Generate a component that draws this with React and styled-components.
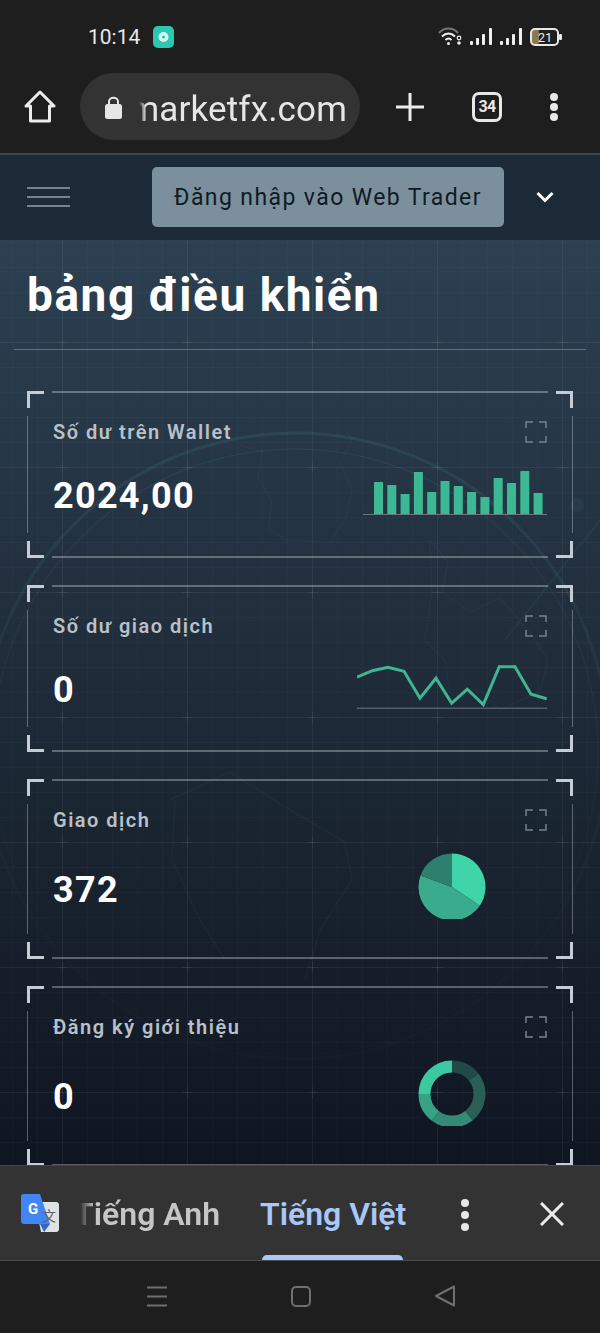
import React from 'react';
import styled, { createGlobalStyle } from 'styled-components';

const GlobalStyle = createGlobalStyle`
  html, body {
    margin: 0;
    padding: 0;
    background: #1e1e1e;
  }

  body {
    font-family: Roboto, "Noto Sans", sans-serif;
  }
`;

const Page = styled.div`
  width: 600px;
  height: 1333px;
  display: flex;
  flex-direction: column;
  overflow: hidden;
`;

const TopChrome = styled.div`
  height: 153px;
  background: #1e1e1e;
  display: flex;
  flex-direction: column;
  flex-shrink: 0;
`;

const StatusBar = styled.div`
  height: 73px;
  padding: 0 38px 0 88px;
  display: flex;
  align-items: center;
  box-sizing: border-box;
`;

const Clock = styled.span`
  color: #e8e8e8;
  font-size: 21px;
  width: 65px;
  padding-top: 1px;
`;

const StatusIcons = styled.div`
  margin-left: auto;
  display: flex;
  align-items: center;
  gap: 8px;
`;

const BrowserBar = styled.div`
  height: 80px;
  display: flex;
  align-items: flex-start;
`;

const HomeButton = styled.div`
  width: 80px;
  height: 67px;
  display: flex;
  align-items: center;
  justify-content: center;
`;

const AddressPill = styled.div`
  width: 280px;
  height: 67px;
  border-radius: 34px;
  background: #333333;
  display: flex;
  align-items: center;
  padding-left: 25px;
  box-sizing: border-box;
  gap: 17px;
`;

const AddressClip = styled.div`
  width: 208px;
  padding-top: 5px;
  overflow: hidden;
  display: flex;
  justify-content: flex-end;
  mask-image: linear-gradient(to right, transparent 0, #000 7px);
`;

const AddressText = styled.span`
  color: #e6e6e6;
  font-size: 35px;
  white-space: nowrap;
  letter-spacing: 0.15px;
`;

const PlusButton = styled.div`
  width: 100px;
  height: 67px;
  display: flex;
  align-items: center;
  justify-content: center;
`;

const TabCount = styled.div`
  width: 30px;
  height: 30px;
  margin-left: 12px;
  margin-top: 19px;
  border: 3px solid #e8e8e8;
  border-radius: 7px;
  box-sizing: border-box;
  color: #e8e8e8;
  font-size: 16px;
  font-weight: 700;
  letter-spacing: -0.6px;
  line-height: 24px;
  text-align: center;
  flex-shrink: 0;
`;

const MenuDots = styled.div`
  display: flex;
  flex-direction: column;
  gap: ${(props) => props.$gap}px;
  margin-left: ${(props) => props.$left}px;
  margin-top: ${(props) => props.$top}px;

  span {
    width: ${(props) => props.$size}px;
    height: ${(props) => props.$size}px;
    border-radius: 50%;
    background: #e8e8e8;
  }
`;

const SiteNav = styled.div`
  height: 87px;
  flex-shrink: 0;
  background: #1c2a38;
  border-top: 2px solid #3d4750;
  box-sizing: border-box;
  display: flex;
  align-items: flex-start;
  padding: 12px 0 0 27px;
`;

const Burger = styled.div`
  width: 43px;
  height: 60px;
  margin-right: 82px;
  display: flex;
  flex-direction: column;
  justify-content: center;
  gap: 7px;

  span {
    height: 2px;
    background: #76838e;
  }
`;

const TraderButton = styled.div`
  width: 352px;
  height: 60px;
  border-radius: 5px;
  background: #7b909c;
  color: #0f1a24;
  font-size: 23px;
  letter-spacing: 1.4px;
  display: flex;
  align-items: center;
  justify-content: center;
`;

const Chevron = styled.div`
  width: 82px;
  height: 60px;
  display: flex;
  align-items: center;
  justify-content: center;
`;

const Main = styled.main`
  position: relative;
  height: 925px;
  flex-shrink: 0;
  overflow: hidden;
  background:
    linear-gradient(rgba(255, 255, 255, 0.035) 1px, transparent 1px) 0 102px / 100% 125px,
    linear-gradient(90deg, rgba(255, 255, 255, 0.035) 1px, transparent 1px) 62px 0 / 125px 100%,
    linear-gradient(rgba(255, 255, 255, 0.018) 1px, transparent 1px) 0 2px / 100% 25px,
    linear-gradient(90deg, rgba(255, 255, 255, 0.018) 1px, transparent 1px) 12px 0 / 25px 100%,
    linear-gradient(#2c4052 0, #283a4a 140px, #212e3c 380px, #1b2633 560px, #161e2b 720px, #0f1622 925px);
`;

const Globe = styled.svg`
  position: absolute;
  left: 0;
  top: 0;
  width: 600px;
  height: 925px;
  pointer-events: none;
`;

const Content = styled.div`
  position: relative;
`;

const Title = styled.h1`
  margin: 0 14px;
  height: 110px;
  padding: 26px 0 0 13px;
  box-sizing: border-box;
  border-bottom: 1px solid rgba(255, 255, 255, 0.27);
  color: #ffffff;
  font-size: 46px;
  line-height: 58px;
  font-weight: 700;
  letter-spacing: 1.55px;
`;

const CardList = styled.div`
  padding: 41px 27px 0;
  display: flex;
  flex-direction: column;
  gap: 27px;
`;

const Card = styled.section`
  position: relative;
  height: ${(props) => props.$height}px;
  padding: 29px 26px 0;
  box-sizing: border-box;
  flex-shrink: 0;

  &::before {
    content: '';
    position: absolute;
    left: 25px;
    right: 25px;
    top: 0;
    bottom: 0;
    border-top: 2px solid rgba(255, 255, 255, 0.3);
    border-bottom: 2px solid rgba(255, 255, 255, 0.3);
  }

  &::after {
    content: '';
    position: absolute;
    left: 0;
    right: 0;
    top: 25px;
    bottom: 25px;
    border-left: 1px solid rgba(255, 255, 255, 0.3);
    border-right: 1px solid rgba(255, 255, 255, 0.3);
  }
`;

const Corner = styled.span`
  position: absolute;
  width: 17px;
  height: 17px;
  box-sizing: border-box;
  border: 0 solid #c6ccd3;
  ${(props) => (props.$v === 'top' ? 'top: 0; border-top-width: 3px;' : 'bottom: 0; border-bottom-width: 3px;')}
  ${(props) => (props.$h === 'left' ? 'left: 0; border-left-width: 3px;' : 'right: 0; border-right-width: 3px;')}
`;

const CardHeader = styled.div`
  height: 24px;
  display: flex;
  align-items: center;
  justify-content: space-between;
`;

const CardLabel = styled.h2`
  margin: 0;
  color: #b9c0c8;
  font-size: 20px;
  font-weight: 600;
  letter-spacing: 1.5px;
`;

const CardBody = styled.div`
  height: ${(props) => props.$height}px;
  margin-top: ${(props) => props.$gap}px;
  display: flex;
  align-items: center;
  justify-content: space-between;
`;

const CardValue = styled.div`
  color: #ffffff;
  font-size: 36px;
  font-weight: 700;
  letter-spacing: 1.3px;
  line-height: 42px;
  margin-top: ${(props) => props.$shift || 0}px;
`;

const RoundChart = styled.svg`
  margin-right: 61px;
  flex-shrink: 0;
`;

const TranslateBar = styled.div`
  height: 96px;
  flex-shrink: 0;
  background: #333333;
  border-top: 1px solid #444444;
  border-bottom: 1px solid #4a4a4a;
  box-sizing: border-box;
  display: flex;
  align-items: flex-start;
  padding-left: 21px;
`;

const TranslateLogo = styled.svg`
  margin-top: 28px;
  flex-shrink: 0;
`;

const LanguageClip = styled.div`
  width: 140px;
  margin-left: 21px;
  overflow: hidden;
  display: flex;
  justify-content: flex-end;
  mask-image: linear-gradient(to right, transparent 0, #000 14px);
`;

const LanguageTab = styled.div`
  position: relative;
  height: 94px;
  line-height: 97px;
  font-size: 32px;
  font-weight: 600;
  white-space: nowrap;
  color: ${(props) => (props.$active ? '#a8c7fa' : '#c4c7c5')};
  margin-left: ${(props) => props.$left || 0}px;
  flex-shrink: 0;

  ${(props) => props.$active && `
    &::after {
      content: '';
      position: absolute;
      left: 2px;
      right: 3px;
      bottom: 0;
      height: 5px;
      border-radius: 5px 5px 0 0;
      background: #a8c7fa;
    }
  `}
`;

const CloseButton = styled.div`
  margin-left: 71px;
  margin-top: 36px;
`;

const SystemNav = styled.nav`
  flex: 1;
  min-height: 0;
  background: #1e1e1e;
  display: flex;
  align-items: center;
  padding: 0 0 2px 147px;
  gap: 124px;
`;

const ExpandIcon = () => (
  <svg width="22" height="22" viewBox="0 0 22 22" fill="none" stroke="#75838f" strokeWidth="1.5">
    <path d="M1 7V1h7M14 1h7v6M21 15v6h-7M8 21H1v-6" />
  </svg>
);

const BarChart = () => {
  const heights = [32, 29, 20, 42, 22, 33, 28, 22, 17, 36, 31, 43, 21];

  return (
    <svg width="184" height="46" viewBox="0 0 184 46">
      {heights.map((height, i) => (
        <rect key={i} x={11 + i * 13.3} y={44 - height} width="9" height={height} rx="0.5" fill="#3cb894" />
      ))}
      <path d="M0 44.5H184" stroke="#6b7782" strokeWidth="1" />
    </svg>
  );
};

const LineChart = () => (
  <svg width="190" height="46" viewBox="0 1.3 190 46" fill="none">
    <path
      d="M0 14.5L15.3 8L31 4.500L47 8.500L63 35.500L79 15.500L94.700 40.500L110.300 26.500L126.300 42L142.300 4L158 4L174 31.500L189.700 36"
      stroke="#3fb594"
      strokeWidth="3"
    />
    <path d="M0 45.500H190" stroke="#6b7782" strokeWidth="1" />
  </svg>
);

const polar = (cx, cy, r, deg) => {
  const rad = ((deg - 90) * Math.PI) / 180;
  return `${cx + r * Math.cos(rad)} ${cy + r * Math.sin(rad)}`;
};

const slice = (cx, cy, r, from, to) => (
  `M${cx} ${cy}L${polar(cx, cy, r, from)}A${r} ${r} 0 ${to - from > 180 ? 1 : 0} 1 ${polar(cx, cy, r, to)}Z`
);

const arc = (cx, cy, r, from, to) => (
  `M${polar(cx, cy, r, from)}A${r} ${r} 0 ${to - from > 180 ? 1 : 0} 1 ${polar(cx, cy, r, to)}`
);

const PieChart = () => (
  <RoundChart width="68" height="66" viewBox="0 0 68 66">
    <path d={slice(34, 34, 33.5, 0, 124)} fill="#40d5a8" />
    <path d={slice(34, 34, 33.5, 124, 290)} fill="#3aab8d" />
    <path d={slice(34, 34, 33.5, 290, 360)} fill="#2f7f6e" />
  </RoundChart>
);

const DonutChart = () => {
  const parts = [
    [0, 52, '#1f4a47'],
    [52, 142, '#2a5f56'],
    [142, 217, '#338a76'],
    [217, 270, '#36a386'],
    [270, 360, '#3cc8a0'],
  ];

  return (
    <RoundChart width="68" height="66" viewBox="0 0 68 66" fill="none">
      {parts.map(([from, to, color]) => (
        <path key={from} d={arc(34, 34, 27.5, from, to)} stroke={color} strokeWidth="12" />
      ))}
    </RoundChart>
  );
};

const Corners = () => (
  <>
    <Corner $v="top" $h="left" />
    <Corner $v="top" $h="right" />
    <Corner $v="bottom" $h="left" />
    <Corner $v="bottom" $h="right" />
  </>
);

const App = () => (
  <Page>
    <GlobalStyle />
    <TopChrome>
      <StatusBar>
        <Clock>10:14</Clock>
        <svg width="21" height="22" viewBox="0 0 21 22">
          <rect width="21" height="22" rx="5" fill="#2cc7b0" />
          <circle cx="10.500" cy="11" r="5" fill="#d8f5ef" />
          <circle cx="10.500" cy="11" r="1.500" fill="#2cc7b0" />
        </svg>
        <StatusIcons>
          <svg width="24" height="20" viewBox="0 0 24 20" fill="none" stroke="#efefef">
            <path d="M1 6C6 0 15 0 20 6" strokeWidth="2" stroke="#777" />
            <path d="M4 9.500C8 5.500 13 5.500 17 9.500" strokeWidth="2" />
            <path d="M7.500 13C9.500 11 11.500 11 13.500 13" strokeWidth="2" />
            <circle cx="10.500" cy="16.500" r="1.500" fill="#efefef" stroke="none" />
            <circle cx="21" cy="11" r="1.800" strokeWidth="1.200" />
            <circle cx="21" cy="16" r="1.800" fill="#efefef" stroke="none" />
          </svg>
          <svg width="22" height="19" viewBox="0 0 22 19" fill="#efefef">
            <rect x="0" y="14" width="3" height="4" rx="1" />
            <rect x="6" y="11" width="3" height="7" rx="1" />
            <rect x="12" y="7" width="3" height="11" rx="1" />
            <rect x="19" y="1" width="3" height="17" rx="1" />
          </svg>
          <svg width="22" height="19" viewBox="0 0 22 19" fill="#efefef">
            <rect x="0" y="14" width="3" height="4" rx="1" />
            <rect x="6" y="11" width="3" height="7" rx="1" />
            <rect x="12" y="7" width="3" height="11" rx="1" />
            <rect x="19" y="1" width="3" height="17" rx="1" />
          </svg>
          <svg width="32" height="18" viewBox="0 0 32 18">
            <rect x="2" y="1.500" width="7" height="15" rx="2" fill="#8a7a50" />
            <rect x="1" y="1" width="27" height="16" rx="4" fill="none" stroke="#e8e8e8" strokeWidth="2" />
            <rect x="29" y="6" width="3" height="6" rx="1" fill="#e8e8e8" />
            <text x="15" y="14" textAnchor="middle" fontSize="13" fill="#e8e8e8" fontFamily="Roboto">21</text>
          </svg>
        </StatusIcons>
      </StatusBar>
      <BrowserBar>
        <HomeButton>
          <svg width="32" height="33" viewBox="0 0 32 33" fill="none" stroke="#ececec" strokeWidth="3" strokeLinejoin="round">
            <path d="M2 16L16 2L30 16H25.500V31H6.500V16Z" />
          </svg>
        </HomeButton>
        <AddressPill>
          <svg width="17" height="24" viewBox="0 0 17 24" fill="#e6e6e6">
            <path d="M4 10V6.500C4 1.500 13 1.500 13 6.500V10" fill="none" stroke="#e6e6e6" strokeWidth="2" />
            <rect y="9" width="17" height="15" rx="2.500" />
          </svg>
          <AddressClip>
            <AddressText>marketfx.com</AddressText>
          </AddressClip>
        </AddressPill>
        <PlusButton>
          <svg width="28" height="28" viewBox="0 0 28 28" stroke="#ececec" strokeWidth="3">
            <path d="M14 0V28M0 14H28" />
          </svg>
        </PlusButton>
        <TabCount>34</TabCount>
        <MenuDots $gap={2} $left={48} $top={20} $size={8}>
          <span />
          <span />
          <span />
        </MenuDots>
      </BrowserBar>
    </TopChrome>

    <SiteNav>
      <Burger>
        <span />
        <span />
        <span />
      </Burger>
      <TraderButton>Đăng nhập vào Web Trader</TraderButton>
      <Chevron>
        <svg width="18" height="12" viewBox="0 0 18 12" fill="none" stroke="#ffffff" strokeWidth="3">
          <path d="M1.500 2L9 9.500L16.500 2" />
        </svg>
      </Chevron>
    </SiteNav>

    <Main>
      <Globe viewBox="0 0 600 925" fill="none">
        <defs>
          <pattern id="gridCross" x="57" y="97" width="125" height="125" patternUnits="userSpaceOnUse">
            <path d="M0 5.500H11M5.500 0V11" stroke="#ffffff" strokeOpacity="0.055" />
          </pattern>
          <linearGradient id="globeFade" x1="0" y1="0" x2="0" y2="1">
            <stop offset="0" stopColor="#3f8f88" stopOpacity="0.18" />
            <stop offset="0.45" stopColor="#3f8f88" stopOpacity="0.08" />
            <stop offset="0.8" stopColor="#3f8f88" stopOpacity="0.02" />
          </linearGradient>
        </defs>
        <rect width="600" height="925" fill="url(#gridCross)" />
        <circle cx="295" cy="506" r="313" stroke="url(#globeFade)" strokeWidth="3" />
        <circle cx="295" cy="512" r="303" stroke="url(#globeFade)" strokeWidth="1" />
        <path
          d="M240 205L262 212L258 236L272 262L268 288L285 300L330 302L345 280L352 250L340 222L352 200L345 190M430 300L448 322L442 352L470 372L500 358L530 392L548 420L540 452L500 470L478 448L452 462L445 420L425 400L432 350ZM170 560L230 532L290 570L345 602L352 640L320 690L305 740M175 560L172 620L200 680L225 720"
          stroke="#6d9a9c"
          strokeOpacity="0.06"
          strokeWidth="1.500"
          strokeLinejoin="round"
        />
        <path d="M505 400L600 280" stroke="#3f8f88" strokeOpacity="0.1" strokeWidth="2" />
        <circle cx="577" cy="265" r="7" fill="#3f8f88" fillOpacity="0.1" />
      </Globe>
      <Content>
        <Title>bảng điều khiển</Title>
        <CardList>
          <Card $height={167}>
            <Corners />
            <CardHeader>
              <CardLabel>Số dư trên Wallet</CardLabel>
              <ExpandIcon />
            </CardHeader>
            <CardBody $height={46} $gap={26}>
              <CardValue $shift={6}>2024,00</CardValue>
              <BarChart />
            </CardBody>
          </Card>
          <Card $height={167}>
            <Corners />
            <CardHeader>
              <CardLabel>Số dư giao dịch</CardLabel>
              <ExpandIcon />
            </CardHeader>
            <CardBody $height={46} $gap={26}>
              <CardValue $shift={6}>0</CardValue>
              <LineChart />
            </CardBody>
          </Card>
          <Card $height={180}>
            <Corners />
            <CardHeader>
              <CardLabel>Giao dịch</CardLabel>
              <ExpandIcon />
            </CardHeader>
            <CardBody $height={66} $gap={21}>
              <CardValue $shift={8}>372</CardValue>
              <PieChart />
            </CardBody>
          </Card>
          <Card $height={180}>
            <Corners />
            <CardHeader>
              <CardLabel>Đăng ký giới thiệu</CardLabel>
              <ExpandIcon />
            </CardHeader>
            <CardBody $height={66} $gap={21}>
              <CardValue $shift={8}>0</CardValue>
              <DonutChart />
            </CardBody>
          </Card>
        </CardList>
      </Content>
    </Main>

    <TranslateBar>
      <TranslateLogo width="38" height="38" viewBox="0 0 38 38">
        <path d="M14 8H35C37 8 38 9 38 11V35C38 37 37 38 35 38H20Z" fill="#dfe1e3" />
        <path d="M3 0H19L29 30H3C1 30 0 29 0 27V3C0 1 1 0 3 0Z" fill="#4285f4" />
        <path d="M19 30L29 30L23 38Z" fill="#3367c9" />
        <text x="7" y="20" fontSize="15" fontWeight="700" fill="#ffffff" fontFamily="Roboto">G</text>
        <text x="21" y="27" fontSize="14" fill="#5f6368" fontFamily="Noto Sans CJK SC">文</text>
      </TranslateLogo>
      <LanguageClip>
        <LanguageTab>Tiếng Anh</LanguageTab>
      </LanguageClip>
      <LanguageTab $active $left={40}>Tiếng Việt</LanguageTab>
      <MenuDots $gap={4} $left={55} $top={33} $size={8}>
        <span />
        <span />
        <span />
      </MenuDots>
      <CloseButton>
        <svg width="24" height="24" viewBox="0 0 24 24" stroke="#ececec" strokeWidth="3">
          <path d="M1 1L23 23M23 1L1 23" />
        </svg>
      </CloseButton>
    </TranslateBar>

    <SystemNav>
      <svg width="20" height="21" viewBox="0 0 20 21" stroke="#6f6f6f" strokeWidth="2">
        <path d="M0 1.500H20M0 10.500H20M0 19.500H20" />
      </svg>
      <svg width="20" height="21" viewBox="0 0 20 21" fill="none" stroke="#6f6f6f" strokeWidth="2">
        <rect x="1" y="1" width="18" height="19" rx="4" />
      </svg>
      <svg width="20" height="22" viewBox="0 0 20 22" fill="none" stroke="#6f6f6f" strokeWidth="2" strokeLinejoin="round">
        <path d="M19 1.500V20.500L1 11Z" />
      </svg>
    </SystemNav>
  </Page>
);

export default App;
